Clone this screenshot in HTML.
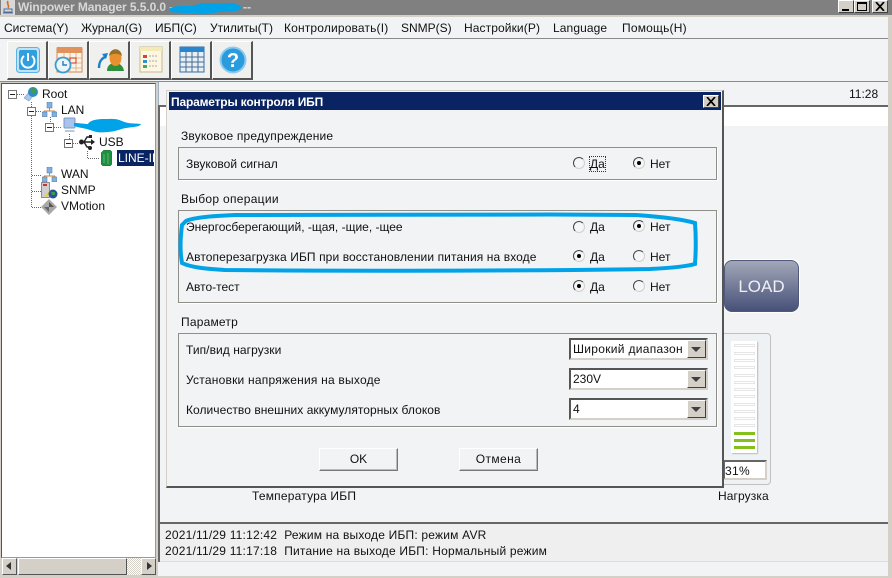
<!DOCTYPE html>
<html><head><meta charset="utf-8">
<style>
html,body{margin:0;padding:0}
body{width:892px;height:578px;overflow:hidden;position:relative;background:#f1f3f5;font-family:"Liberation Sans",sans-serif;font-size:12px;color:#111}
.a{position:absolute;box-sizing:border-box}
.t{position:absolute;white-space:nowrap;line-height:14px}
.wb{position:absolute;width:16px;height:13px;background:#d4d0c8;border:1px solid;border-color:#fff #404040 #404040 #fff;box-sizing:border-box}
.tb{position:absolute;top:41px;width:41px;height:39px;background:#f0f0ee;border-style:solid;border-color:#fff #555 #555 #fff;box-sizing:border-box;border-width:1px 2px 2px 1px}
.gb{position:absolute;box-sizing:border-box;border:1px solid #8f8e88;box-shadow:1px 1px 0 #fff}
.r{position:absolute;width:12px;height:12px;box-sizing:border-box;border-radius:50%;background:#f5f6f7;border:1px solid;border-color:#444 #d4d0c8 #d4d0c8 #444}
.r.on::after{content:"";position:absolute;left:3px;top:3px;width:4px;height:4px;border-radius:50%;background:#000}
.cb{position:absolute;left:569px;width:139px;height:22px;background:#fff;border:2px solid;border-color:#555 #d4d0c8 #d4d0c8 #555;box-sizing:border-box}
.cb i{position:absolute;right:0;top:0;width:19px;height:18px;background:#d4d0c8;border:1px solid;border-color:#fff #404040 #404040 #fff;box-sizing:border-box}
.cb i::after{content:"";position:absolute;left:3px;top:6px;border:5px solid transparent;border-top:5px solid #404040;border-bottom:0}
.cb span{position:absolute;left:2px;top:2px;line-height:14px;white-space:nowrap}
.btn{position:absolute;top:448px;width:79px;height:23px;background:#f1f3f5;border:1px solid;border-color:#fff #777 #777 #fff;box-shadow:inset -1px -1px 0 #bbb;box-sizing:border-box;text-align:center;line-height:21px;color:#111}
.bar{position:absolute;left:44px;width:21px;height:3px;background:#fff;border:1px solid #e6e6e6;box-sizing:border-box}
.dot{position:absolute;background:repeating-linear-gradient(90deg,#666 0 1px,transparent 1px 2px);height:1px}
.dotv{position:absolute;background:repeating-linear-gradient(0deg,#666 0 1px,transparent 1px 2px);width:1px}
.ex{position:absolute;width:9px;height:9px;border:1px solid #777;box-sizing:border-box;background:#fff}
.ex::after{content:"";position:absolute;left:1px;top:3px;width:5px;height:1px;background:#222}
</style></head><body>

<!-- title bar -->
<div class="a" style="left:0;top:0;width:892px;height:15px;background:#808080"></div>
<div class="a" style="left:0;top:15px;width:892px;height:2px;background:#d4d0c8"></div>
<svg class="a" style="left:1px;top:0" width="14" height="15" viewBox="0 0 14 15"><rect width="14" height="15" fill="#d8d8d8"/><path d="M7 1C5 4 9 5 7 8" stroke="#d5701c" stroke-width="1.6" fill="none"/><path d="M3 9h8v3H3z" fill="none" stroke="#4a6f9c"/><path d="M2 13h10" stroke="#4a6f9c"/></svg>
<div class="t" style="left:18px;top:0;font-weight:bold;font-size:12px;line-height:15px;color:#d8d8d8;letter-spacing:-.08px">Winpower Manager 5.5.0.0 --</div>
<div class="t" style="left:243px;top:0;font-weight:bold;line-height:15px;color:#d8d8d8">--</div>
<svg class="a" style="left:168px;top:1px" width="76" height="14"><path d="M2 7C10 4 16 5 22 5S30 2 38 2 50 3 58 2 70 3 74 7C72 11 62 10 52 11S40 14 30 13 12 12 2 11Z" fill="#00a2e8"/></svg>
<div class="wb" style="left:838px;top:0"><div class="a" style="left:3px;top:8px;width:7px;height:2px;background:#000"></div></div>
<div class="wb" style="left:854px;top:0"><div class="a" style="left:2px;top:1px;width:10px;height:9px;border:1px solid #000;border-top-width:2px"></div></div>
<div class="wb" style="left:872px;top:0"><svg class="a" style="left:2px;top:1px" width="10" height="9"><path d="M1 0L9 9M9 0L1 9" stroke="#000" stroke-width="1.7"/></svg></div>

<!-- menu -->
<div class="a" style="left:0;top:17px;width:892px;height:21px;background:#f1f3f5"></div>
<div class="a" style="left:0;top:38px;width:892px;height:1px;background:#8a8a8a"></div>
<div class="t" style="left:4px;top:21px">Система(Y)</div>
<div class="t" style="left:81px;top:21px">Журнал(G)</div>
<div class="t" style="left:155px;top:21px">ИБП(C)</div>
<div class="t" style="left:210px;top:21px">Утилиты(T)</div>
<div class="t" style="left:284px;top:21px;letter-spacing:.16px">Контролировать(I)</div>
<div class="t" style="left:401px;top:21px">SNMP(S)</div>
<div class="t" style="left:464px;top:21px;letter-spacing:.1px">Настройки(P)</div>
<div class="t" style="left:553px;top:21px;letter-spacing:.1px">Language</div>
<div class="t" style="left:622px;top:21px;letter-spacing:.2px">Помощь(H)</div>

<!-- toolbar -->
<div class="a" style="left:0;top:81px;width:892px;height:1px;background:#7f8c9c"></div>
<div class="tb" style="left:7px"><svg class="a" style="left:8px;top:5px" width="24" height="26"><rect x="0.5" y="0.5" width="23" height="25" rx="3" fill="#bfe2f5" stroke="#5cb2e4"/><rect x="3" y="3" width="18" height="20" rx="2" fill="#2f9fe0"/><path d="M8 9A6.5 6.5 0 1 0 16 9" fill="none" stroke="#fff" stroke-width="2"/><path d="M12 6v8" stroke="#fff" stroke-width="2"/></svg></div>
<div class="tb" style="left:48px"><svg class="a" style="left:5px;top:4px" width="30" height="28"><rect x="3" y="2" width="25" height="24" fill="#fbf3e4" stroke="#d08a58"/><rect x="3" y="1" width="25" height="6" fill="#e0915c"/><path d="M3 12h25M3 17h25M3 22h25M10 7v19M16 7v19M22 7v19" stroke="#e2b48e"/><rect x="16" y="12" width="6" height="5" fill="none" stroke="#d03020"/><circle cx="9" cy="19" r="7.5" fill="#eaf5fb" stroke="#3d9bd0" stroke-width="1.8"/><path d="M9 15v4h4" stroke="#2a7bb0" fill="none" stroke-width="1.4"/></svg></div>
<div class="tb" style="left:89px"><svg class="a" style="left:6px;top:4px" width="30" height="28"><path d="M3 22C3 16 5 13 9 11" fill="none" stroke="#1c80c8" stroke-width="2.4"/><path d="M6 8l6-1-2 6z" fill="#1c80c8"/><path d="M11 25c0-6 4-8 8-8s8 2 9 8z" fill="#2f8e3a"/><ellipse cx="19.500" cy="12" rx="6" ry="8" fill="#e8902e"/><path d="M13 10c1-9 12-9 13 0-3-3-10-3-13 0z" fill="#94702a"/></svg></div>
<div class="tb" style="left:130px"><svg class="a" style="left:8px;top:4px" width="24" height="28"><rect x="1" y="1" width="22" height="25" fill="#fdf7e2" stroke="#c9b98a"/><rect x="1" y="1" width="22" height="4" fill="#f5e9b8"/><rect x="4" y="9" width="4" height="3" fill="#d84040"/><rect x="4" y="14" width="4" height="3" fill="#3090d0"/><rect x="4" y="19" width="4" height="3" fill="#40a860"/><path d="M10 10h9M10 15h9M10 20h9" stroke="#aaa" stroke-dasharray="2 1"/></svg></div>
<div class="tb" style="left:171px"><svg class="a" style="left:7px;top:4px" width="26" height="28"><rect x="1" y="1" width="24" height="25" fill="#e6f0f8" stroke="#2f6fa8"/><rect x="1" y="1" width="24" height="5" fill="#2a86cc"/><path d="M1 11h24M1 16h24M1 21h24M7 6v20M13 6v20M19 6v20" stroke="#4a6a8a"/></svg></div>
<div class="tb" style="left:212px"><svg class="a" style="left:6px;top:4px" width="28" height="28"><circle cx="14" cy="14" r="12.500" fill="#2a9bdc" stroke="#8ccbee" stroke-width="2"/><text x="14" y="21" font-family="Liberation Sans" font-weight="bold" font-size="20" fill="#fff" text-anchor="middle">?</text></svg></div>

<!-- left tree panel -->
<div class="a" style="left:0;top:82px;width:158px;height:496px;background:#d4d0c8"></div>
<div class="a" style="left:1px;top:83px;width:155px;height:475px;background:#fff;border:1px solid;border-color:#555 #999 #999 #555"></div>

<div class="ex" style="left:8px;top:90px"></div><div class="dot" style="left:17px;top:94px;width:7px"></div>
<svg class="a" style="left:23px;top:86px" width="16" height="16"><path d="M1 12l5-6 5 3-5 6z" fill="#a8c8f0" stroke="#5a7fa8" stroke-width=".5"/><circle cx="10" cy="6" r="5" fill="#2f8bc8"/><path d="M7 3l5-1 2 4-5 2z" fill="#3aa050"/></svg>
<div class="t" style="left:42px;top:87px">Root</div>
<div class="dotv" style="left:31px;top:101px;height:106px"></div>
<div class="ex" style="left:27px;top:107px"></div><div class="dot" style="left:36px;top:111px;width:6px"></div>
<svg class="a" style="left:42px;top:102px" width="15" height="15"><rect x="5" y="0" width="5" height="6" fill="#7fb0e0" stroke="#4a74a8" stroke-width=".5"/><path d="M7.500 6v3M2 9h11M2 9v2M13 9v2" stroke="#d08030"/><rect x="0" y="10" width="5" height="5" fill="#7fb0e0" stroke="#4a74a8" stroke-width=".5"/><rect x="10" y="10" width="5" height="5" fill="#7fb0e0" stroke="#4a74a8" stroke-width=".5"/></svg>
<div class="t" style="left:61px;top:103px">LAN</div>
<div class="dotv" style="left:50px;top:116px;height:8px"></div>
<div class="ex" style="left:45px;top:123px"></div><div class="dot" style="left:54px;top:127px;width:8px"></div>
<div class="dotv" style="left:69px;top:133px;height:6px"></div>
<svg class="a" style="left:63px;top:117px" width="14" height="16"><rect x="1" y="1" width="11" height="10" rx="1" fill="#a8c4ec" stroke="#7a98c8"/><path d="M2 13h9l1 2H2z" fill="#c0c8d8"/></svg>
<svg class="a" style="left:74px;top:117px" width="68" height="17"><path d="M0 6C6 6 10 7 14 7C16 3 24 2 30 2S42 1 48 4 60 6 67 7C66 10 58 10 52 11S44 14 34 15 22 15 16 13 6 11 0 9Z" fill="#00a2e8"/></svg>
<div class="ex" style="left:64px;top:139px"></div><div class="dot" style="left:73px;top:143px;width:6px"></div>
<svg class="a" style="left:79px;top:134px" width="16" height="17"><path d="M2 8h11M5 8L8 3h3M5 8l3 5h2" stroke="#222" stroke-width="1.4" fill="none"/><path d="M16 8l-4-3v6z" fill="#222"/><circle cx="2.500" cy="8" r="2.500" fill="#222"/><rect x="10" y="1" width="3" height="3" fill="#222"/><circle cx="11" cy="14" r="2" fill="#222"/></svg>
<div class="t" style="left:99px;top:135px">USB</div>
<div class="dot" style="left:88px;top:158px;width:12px"></div><div class="dotv" style="left:87px;top:150px;height:8px"></div>
<svg class="a" style="left:101px;top:150px" width="11" height="16"><path d="M0 3l3-3h6l2 2v12l-2 2H2l-2-2z" fill="#1f9040" stroke="#126028" stroke-width=".5"/><path d="M7 3v11M3 4v9" stroke="#5ab878"/></svg>
<div class="a" style="left:117px;top:150px;width:37px;height:16px;background:#0a2463;overflow:hidden"><div class="t" style="left:1px;top:1px;color:#fff">LINE-INT</div></div>
<div class="dot" style="left:32px;top:175px;width:10px"></div>
<svg class="a" style="left:42px;top:167px" width="15" height="15"><rect x="5" y="0" width="5" height="6" fill="#7fb0e0" stroke="#4a74a8" stroke-width=".5"/><path d="M7.500 6v3M2 9h11M2 9v2M13 9v2" stroke="#d08030"/><rect x="0" y="10" width="5" height="5" fill="#7fb0e0" stroke="#4a74a8" stroke-width=".5"/><rect x="10" y="10" width="5" height="5" fill="#7fb0e0" stroke="#4a74a8" stroke-width=".5"/></svg>
<div class="t" style="left:61px;top:167px">WAN</div>
<div class="dot" style="left:32px;top:191px;width:10px"></div>
<svg class="a" style="left:41px;top:182px" width="17" height="17"><rect x="0.500" y="0.500" width="8" height="15" fill="#cfcfcf" stroke="#666" stroke-width=".7"/><rect x="2" y="2" width="4" height="2" fill="#d03030"/><path d="M5 14l6-6" stroke="#f0d020" stroke-width="2"/><circle cx="12" cy="12" r="4.500" fill="#2a50a0"/><path d="M10 10h4v3h-3z" fill="#3a9a50"/></svg>
<div class="t" style="left:61px;top:183px">SNMP</div>
<div class="dot" style="left:32px;top:207px;width:10px"></div>
<svg class="a" style="left:41px;top:199px" width="16" height="16"><path d="M8 0l8 8-8 8-8-8z" fill="#a8a8a8"/><path d="M8 3l5 5-5 0z" fill="#555"/><path d="M3 8h5v5z" fill="#666"/></svg>
<div class="t" style="left:61px;top:199px">VMotion</div>

<!-- left scrollbar -->
<div class="a" style="left:2px;top:558px;width:15px;height:17px;background:#d4d0c8;border:1px solid;border-color:#fff #555 #555 #fff"></div>
<div class="a" style="left:6px;top:562px;border:4px solid transparent;border-right:5px solid #333;border-left:0"></div>
<div class="a" style="left:18px;top:558px;width:109px;height:17px;background:#d4d0c8;border:1px solid;border-color:#fff #555 #555 #fff"></div>
<div class="a" style="left:127px;top:558px;width:14px;height:17px;background:repeating-conic-gradient(#d4d0c8 0 25%,#fff 0 50%) 0 0/2px 2px"></div>
<div class="a" style="left:141px;top:558px;width:15px;height:17px;background:#d4d0c8;border:1px solid;border-color:#fff #555 #555 #fff"></div>
<div class="a" style="left:147px;top:562px;border:4px solid transparent;border-left:5px solid #333;border-right:0"></div>

<!-- right content bg -->
<div class="a" style="left:158px;top:105px;width:730px;height:2px;background:#666"></div>
<div class="a" style="left:160px;top:107px;width:728px;height:19px;background:#fff"></div>
<div class="t" style="left:849px;top:87px">11:28</div>

<!-- LOAD -->
<div class="a" style="left:723px;top:259px;width:77px;height:54px;border-radius:9px;background:linear-gradient(#a4a9b9,#454f78);border:1px solid #fff;box-shadow:inset 0 0 0 1px #50597c"></div>
<div class="t" style="left:723px;top:277px;width:77px;text-align:center;color:#f0f0f4;font-size:17px;line-height:19px">LOAD</div>

<!-- load gauge -->
<div class="a" style="left:690px;top:333px;width:81px;height:152px;background:#eef2f5;border:1px solid #c0c0c0;border-radius:4px"></div>
<div class="a" style="left:731px;top:341px;width:26px;height:112px;background:#fff;box-shadow:1px 1px 1px #bbb"></div>
<div class="a" style="left:690px;top:333px;width:0;height:0">
<div class="bar" style="top:11px"></div><div class="bar" style="top:19px"></div><div class="bar" style="top:26px"></div><div class="bar" style="top:33px"></div><div class="bar" style="top:41px"></div><div class="bar" style="top:48px"></div><div class="bar" style="top:55px"></div><div class="bar" style="top:62px"></div><div class="bar" style="top:70px"></div><div class="bar" style="top:77px"></div><div class="bar" style="top:84px"></div><div class="bar" style="top:91px"></div>
<div class="bar" style="top:99px;background:#84c01c;border:0"></div><div class="bar" style="top:106px;background:#84c01c;border:0"></div><div class="bar" style="top:113px;background:#84c01c;border:0"></div>
</div>
<div class="a" style="left:723px;top:460px;width:44px;height:20px;background:#fff;border:2px solid;border-color:#666 #d4d0c8 #d4d0c8 #666"></div>
<div class="t" style="left:725px;top:464px;letter-spacing:.3px">31%</div>
<div class="t" style="left:718px;top:489px;letter-spacing:.1px">Нагрузка</div>
<div class="t" style="left:252px;top:489px;letter-spacing:.2px">Температура ИБП</div>

<!-- log -->
<div class="a" style="left:158px;top:522px;width:734px;height:2px;background:#666"></div>
<div class="a" style="left:160px;top:524px;width:732px;height:38px;background:#efefef;border-bottom:1px solid #ddd"></div>
<div class="a" style="left:158px;top:82px;width:1px;height:23px;background:#a0b0c0"></div>
<div class="a" style="left:158px;top:105px;width:2px;height:457px;background:#666"></div>
<div class="t" style="left:165px;top:528px;letter-spacing:.2px">2021/11/29 11:12:42&nbsp; Режим на выходе ИБП: режим AVR</div>
<div class="t" style="left:165px;top:544px;letter-spacing:.2px">2021/11/29 11:17:18&nbsp; Питание на выходе ИБП: Нормальный режим</div>
<div class="a" style="left:0;top:576px;width:892px;height:2px;background:#d4d0c8"></div>
<div class="a" style="left:888px;top:17px;width:4px;height:561px;background:#d4d0c8"></div>

<!-- dialog -->
<div class="a" style="left:166px;top:90px;width:558px;height:398px;background:#f1f3f5;border-style:solid;border-color:#d4d0c8 #555 #555 #d4d0c8;border-width:1px 2px 2px 1px"></div>
<div class="a" style="left:169px;top:92px;width:552px;height:18px;background:#0a2463"></div>
<div class="t" style="left:171px;top:95px;font-size:12px;font-weight:bold;color:#fff;line-height:14px;letter-spacing:-.18px">Параметры контроля ИБП</div>
<div class="wb" style="left:703px;top:95px"><svg class="a" style="left:2px;top:1px" width="10" height="9"><path d="M1 0L9 9M9 0L1 9" stroke="#000" stroke-width="1.7"/></svg></div>

<div class="t" style="left:181px;top:129px;letter-spacing:.17px">Звуковое предупреждение</div>
<div class="gb" style="left:178px;top:147px;width:539px;height:33px"></div>
<div class="t" style="left:186px;top:157px">Звуковой сигнал</div>
<div class="r" style="left:573px;top:157px"></div>
<div class="t" style="left:590px;top:157px;outline:1px dotted #333">Да</div>
<div class="r on" style="left:633px;top:157px"></div>
<div class="t" style="left:650px;top:157px">Нет</div>

<div class="t" style="left:181px;top:192px;letter-spacing:.3px">Выбор операции</div>
<div class="gb" style="left:178px;top:210px;width:539px;height:93px"></div>
<div class="t" style="left:186px;top:220px">Энергосберегающий, -щая, -щие, -щее</div>
<div class="r" style="left:573px;top:221px"></div><div class="t" style="left:590px;top:220px">Да</div>
<div class="r on" style="left:633px;top:220px"></div><div class="t" style="left:650px;top:220px">Нет</div>
<div class="t" style="left:186px;top:250px;letter-spacing:.1px">Автоперезагрузка ИБП при восстановлении питания на входе</div>
<div class="r on" style="left:573px;top:250px"></div><div class="t" style="left:590px;top:250px">Да</div>
<div class="r" style="left:633px;top:250px"></div><div class="t" style="left:650px;top:250px">Нет</div>
<div class="t" style="left:186px;top:280px">Авто-тест</div>
<div class="r on" style="left:573px;top:280px"></div><div class="t" style="left:590px;top:280px">Да</div>
<div class="r" style="left:633px;top:280px"></div><div class="t" style="left:650px;top:280px">Нет</div>

<div class="t" style="left:181px;top:315px;letter-spacing:.2px">Параметр</div>
<div class="gb" style="left:178px;top:333px;width:539px;height:94px"></div>
<div class="t" style="left:186px;top:343px;letter-spacing:.06px">Тип/вид нагрузки</div>
<div class="t" style="left:186px;top:373px;letter-spacing:.22px">Установки напряжения на выходе</div>
<div class="t" style="left:186px;top:403px;letter-spacing:.05px">Количество внешних аккумуляторных блоков</div>
<div class="cb" style="top:338px"><span style="letter-spacing:.3px">Широкий диапазон</span><i></i></div>
<div class="cb" style="top:368px"><span>230V</span><i></i></div>
<div class="cb" style="top:398px"><span>4</span><i></i></div>

<div class="btn" style="left:319px">OK</div>
<div class="btn" style="left:459px;letter-spacing:.4px">Отмена</div>

<!-- blue annotation -->
<svg class="a" style="left:0;top:0;pointer-events:none" width="892" height="578"><path d="M235 215C210 216 192 218 186 221L182 225C180 240 180 252 182 263C192 268 210 269 225 270C360 271 520 271 650 269C670 268 688 266 695 264C696 250 696 236 695 223C685 220 665 217 636 215C500 214 360 214 235 215Z" fill="none" stroke="#00a2e8" stroke-width="4"/></svg>
</body></html>
